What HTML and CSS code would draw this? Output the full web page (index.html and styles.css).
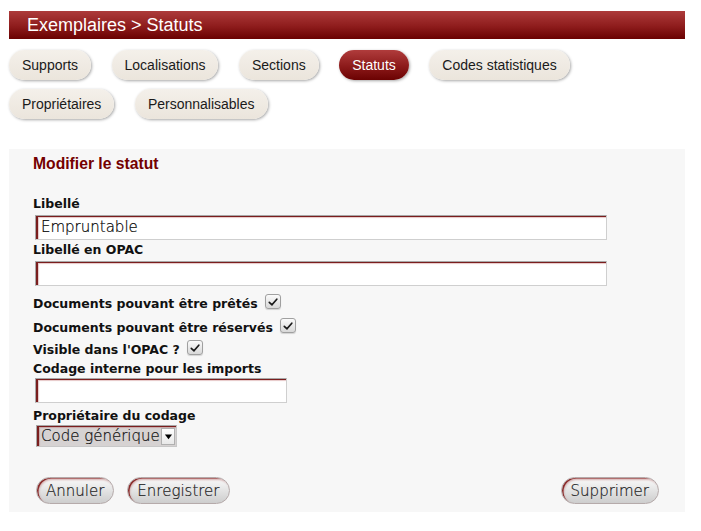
FILE: index.html
```html
<!DOCTYPE html>
<html lang="fr">
<head>
<meta charset="utf-8">
<title>Exemplaires &gt; Statuts</title>
<link rel="stylesheet" href="styles.css">
</head>
<body>
<div class="page">
  <div class="titlebar">Exemplaires &gt; Statuts</div>
  <nav class="tabs">
    <a class="tab">Supports</a>
    <a class="tab">Localisations</a>
    <a class="tab">Sections</a>
    <a class="tab active">Statuts</a>
    <a class="tab">Codes statistiques</a>
    <a class="tab">Propriétaires</a>
    <a class="tab">Personnalisables</a>
  </nav>
  <form class="panel">
    <h3 class="panel-title">Modifier le statut</h3>
    <div class="lbl first">Libellé</div>
    <div class="field wide">Empruntable</div>
    <div class="lbl">Libellé en OPAC</div>
    <div class="field wide"></div>
    <div class="check-row row1"><span class="lbl-inline">Documents pouvant être prêtés</span><span class="checkbox"><svg viewBox="0 0 12 12" width="12" height="12"><path d="M2.3 6.3 L5 8.8 L9.8 3.2" fill="none" stroke="#1a1a1a" stroke-width="1.7" stroke-linecap="round" stroke-linejoin="round"/></svg></span></div>
    <div class="check-row row2"><span class="lbl-inline">Documents pouvant être réservés</span><span class="checkbox"><svg viewBox="0 0 12 12" width="12" height="12"><path d="M2.3 6.3 L5 8.8 L9.8 3.2" fill="none" stroke="#1a1a1a" stroke-width="1.7" stroke-linecap="round" stroke-linejoin="round"/></svg></span></div>
    <div class="check-row row3"><span class="lbl-inline">Visible dans l'OPAC ?</span><span class="checkbox"><svg viewBox="0 0 12 12" width="12" height="12"><path d="M2.3 6.3 L5 8.8 L9.8 3.2" fill="none" stroke="#1a1a1a" stroke-width="1.7" stroke-linecap="round" stroke-linejoin="round"/></svg></span></div>
    <div class="lbl">Codage interne pour les imports</div>
    <div class="field short"></div>
    <div class="lbl">Propriétaire du codage</div>
    <div class="select"><span class="select-text">Code générique</span><span class="select-arrow"><svg viewBox="0 0 8 8" width="9" height="9"><path d="M0.8 2.2 H7.2 L4 6.4 Z" fill="#000"/></svg></span></div>
    <div class="actions">
      <div class="actions-left">
        <button type="button" class="btn">Annuler</button>
        <button type="button" class="btn">Enregistrer</button>
      </div>
      <button type="button" class="btn">Supprimer</button>
    </div>
  </form>
</div>
</body>
</html>
```

FILE: styles.css
```css
* { box-sizing: border-box; }
html, body { margin: 0; padding: 0; background: #fff; }
body { font-family: "Liberation Sans", Arial, sans-serif; }

.page {
  width: 676px;
  margin-left: 9px;
  padding-top: 11px;
}

.titlebar {
  height: 28px;
  line-height: 28px;
  padding-left: 18px;
  font-size: 18px;
  color: #fff;
  background: linear-gradient(to bottom, #ad3b3b 0%, #8e1c1c 55%, #6a0101 100%);
}

.tabs {
  display: flex;
  flex-wrap: wrap;
  column-gap: 20.5px;
  row-gap: 9px;
  margin-top: 11px;
  width: 600px;
}
.tab {
  display: block;
  height: 30px;
  line-height: 31px;
  padding: 0 13px;
  font-size: 14px;
  color: #1a1a1a;
  border-radius: 15px;
  background: linear-gradient(to bottom, #f4f0ea, #ebe5dc);
  box-shadow: 1px 1px 3px rgba(0,0,0,0.35);
}
.tab.active {
  color: #fff;
  background: linear-gradient(to bottom, #b03c3c 0%, #8c1a1a 55%, #6b0202 100%);
}

.panel {
  margin-top: 30px;
  background: #f7f7f7;
  padding: 5px 24px 8px 24px;
  display: flex;
  flex-direction: column;
  align-items: flex-start;
}
.panel-title {
  margin: 0;
  font-size: 15.7px;
  line-height: 20px;
  font-weight: bold;
  color: #740000;
}

.lbl, .lbl-inline {
  font-family: "DejaVu Sans", Verdana, sans-serif;
  font-weight: bold;
  font-size: 12.5px;
  line-height: 16px;
  color: #111;
}
.lbl.first { margin-top: 22px; }

.field {
  height: 25px;
  margin: 3px 0 2px 2px;
  background: #fff;
  border: 1px solid #cfcfcf;
  border-top-color: #a8a8a8;
  border-left-color: #a8a8a8;
  box-shadow: inset 2px 1px 0 #7a1e1e, inset 3px 2px 1px rgba(170,70,70,0.3);
  font-family: "DejaVu Sans", Verdana, sans-serif;
  font-weight: 200;
  font-size: 15px;
  line-height: 23px;
  padding-left: 5px;
  color: #000;
  -webkit-text-stroke: 0.2px #000;
}
.field.wide { width: 572px; }
.field.short { width: 252px; margin: 1px 0 5px 2px; }

.check-row {
  display: flex;
  align-items: baseline;
}
.row1 { margin-top: 6px; height: 24px; }
.row2 { height: 22px; }
.row3 { height: 21px; }
.checkbox {
  width: 16px;
  height: 15px;
  margin-left: 7px;
  border: 1px solid #a0a0a0;
  border-radius: 3px;
  background: linear-gradient(to bottom, #fbfbfb, #d8d8d8);
  box-shadow: 0 1px 1px rgba(0,0,0,0.15);
  display: flex;
  align-items: center;
  justify-content: center;
}

.select {
  display: flex;
  align-items: center;
  width: 141px;
  height: 22px;
  margin: 1px 0 0 3px;
  background: #d6d2d2;
  border: 1px solid #c8c8c8;
  border-top-color: #a8a8a8;
  border-left-color: #a8a8a8;
  box-shadow: inset 2px 1px 0 #7a1e1e, inset 3px 2px 1px rgba(170,70,70,0.3);
}
.select-text {
  flex: 1;
  padding-left: 4px;
  font-family: "DejaVu Sans", Verdana, sans-serif;
  font-weight: 200;
  font-size: 15px;
  line-height: 20px;
  color: #111;
  -webkit-text-stroke: 0.2px #111;
  white-space: nowrap;
  overflow: hidden;
}
.select-arrow {
  width: 14px;
  height: 17px;
  margin-right: 1px;
  background: linear-gradient(to bottom, #fff, #e8e8e8);
  border: 1px solid #b0b0b0;
  display: flex;
  align-items: center;
  justify-content: center;
}

.actions {
  margin-top: 30px;
  width: 100%;
  padding: 0 2px 0 3px;
  display: flex;
  justify-content: space-between;
  align-items: center;
}
.actions-left { display: flex; gap: 13px; }
.btn {
  height: 27px;
  padding: 0 9px;
  border-radius: 14px;
  border: 1px solid #b5aaaa;
  background: linear-gradient(to bottom, #fafafa, #cdcdcd);
  box-shadow: inset 2px 1px 0 -0.5px #8a2a2a, inset 2px 2px 2px rgba(150,40,40,0.35);
  font-family: "DejaVu Sans", Verdana, sans-serif;
  font-weight: 200;
  font-size: 15px;
  color: #222;
  -webkit-text-stroke: 0.2px #222;
  cursor: pointer;
}
```
